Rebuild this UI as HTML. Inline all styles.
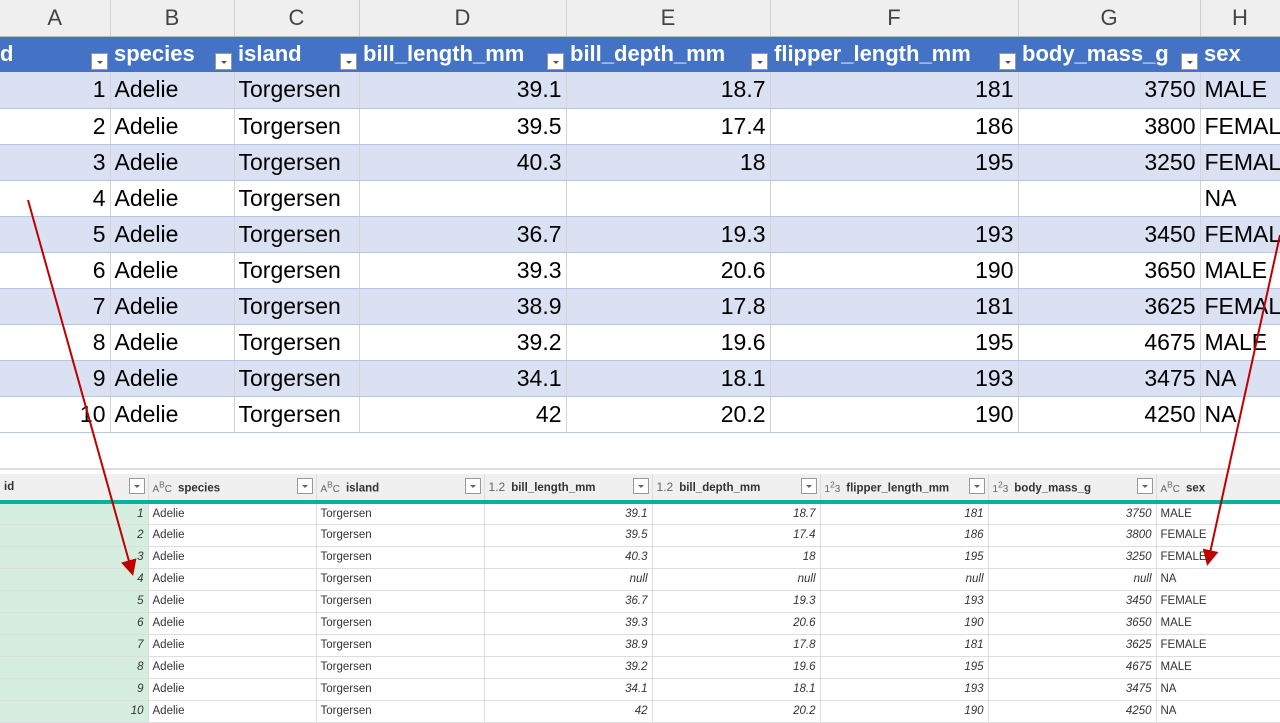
<!DOCTYPE html>
<html><head><meta charset="utf-8"><style>
body{margin:0;width:1280px;height:720px;overflow:hidden;background:#fff;font-family:"Liberation Sans",sans-serif;position:relative}
table{border-collapse:collapse;table-layout:fixed;position:absolute;left:0;width:1280px}
#top{top:0}
#top td{height:36px;padding:0 4px;font-size:23px;white-space:nowrap;overflow:hidden;border-right:1px solid #d4d4d4;box-sizing:border-box}
#top tr.L td{background:#efefef;color:#444;text-align:center;font-size:22px;border-right:1px solid #d0d0d0;border-bottom:1px solid #bbb}
#top tr.H td{background:#4472c4;color:#fff;font-weight:bold;border-right:none;position:relative;font-size:22px}
#top tr.o td{background:#d9e1f2;border-bottom:1px solid #b4c6e7}
#top tr.e td{background:#fff;border-bottom:1px solid #b4c6e7}
.r{text-align:right}
.dd{position:absolute;right:2px;bottom:2px;width:17px;height:17px;background:#fff;border:1px solid #999;box-sizing:border-box}
.dd:after{content:"";position:absolute;left:5px;top:7px;border-left:3px solid transparent;border-right:3px solid transparent;border-top:3px solid #555}
#bot{top:474px}
#bot td{height:22px;padding:0 4px;font-size:11.5px;color:#333;white-space:nowrap;overflow:hidden;box-sizing:border-box;border-right:1px solid #ddd;border-bottom:1px solid #ddd}
#bot tr.H td{height:28px;background:#f0f0f0;font-weight:bold;border-bottom:4px solid #00b4a0;position:relative;border-right:1px solid #ddd;color:#333}
#bot td.g{background:#d5eee0}
#bot td.n{text-align:right;font-style:italic}
.t{font-weight:normal;color:#666;font-size:10px;margin-right:6px}
.d2{position:absolute;right:3px;top:4px;width:16px;height:16px;border:1px solid #999;background:#fff;box-sizing:border-box}
.d2:after{content:"";position:absolute;left:4px;top:6px;border-left:3px solid transparent;border-right:3px solid transparent;border-top:3px solid #666}
</style></head><body>
<table id="top">
<colgroup><col style="width:110px"><col style="width:124px"><col style="width:125px"><col style="width:207px"><col style="width:204px"><col style="width:248px"><col style="width:182px"><col style="width:80px"></colgroup>
<tr class="L"><td>A</td><td>B</td><td>C</td><td>D</td><td>E</td><td>F</td><td>G</td><td>H</td></tr>
<tr class="H"><td style="padding-left:0">d<span class="dd"></span></td><td>species<span class="dd"></span></td><td>island<span class="dd"></span></td><td>bill_length_mm<span class="dd"></span></td><td>bill_depth_mm<span class="dd"></span></td><td>flipper_length_mm<span class="dd"></span></td><td>body_mass_g<span class="dd"></span></td><td>sex</td></tr>
<tr class="o"><td class="r">1</td><td>Adelie</td><td>Torgersen</td><td class="r">39.1</td><td class="r">18.7</td><td class="r">181</td><td class="r">3750</td><td>MALE</td></tr>
<tr class="e"><td class="r">2</td><td>Adelie</td><td>Torgersen</td><td class="r">39.5</td><td class="r">17.4</td><td class="r">186</td><td class="r">3800</td><td>FEMALE</td></tr>
<tr class="o"><td class="r">3</td><td>Adelie</td><td>Torgersen</td><td class="r">40.3</td><td class="r">18</td><td class="r">195</td><td class="r">3250</td><td>FEMALE</td></tr>
<tr class="e"><td class="r">4</td><td>Adelie</td><td>Torgersen</td><td></td><td></td><td></td><td></td><td>NA</td></tr>
<tr class="o"><td class="r">5</td><td>Adelie</td><td>Torgersen</td><td class="r">36.7</td><td class="r">19.3</td><td class="r">193</td><td class="r">3450</td><td>FEMALE</td></tr>
<tr class="e"><td class="r">6</td><td>Adelie</td><td>Torgersen</td><td class="r">39.3</td><td class="r">20.6</td><td class="r">190</td><td class="r">3650</td><td>MALE</td></tr>
<tr class="o"><td class="r">7</td><td>Adelie</td><td>Torgersen</td><td class="r">38.9</td><td class="r">17.8</td><td class="r">181</td><td class="r">3625</td><td>FEMALE</td></tr>
<tr class="e"><td class="r">8</td><td>Adelie</td><td>Torgersen</td><td class="r">39.2</td><td class="r">19.6</td><td class="r">195</td><td class="r">4675</td><td>MALE</td></tr>
<tr class="o"><td class="r">9</td><td>Adelie</td><td>Torgersen</td><td class="r">34.1</td><td class="r">18.1</td><td class="r">193</td><td class="r">3475</td><td>NA</td></tr>
<tr class="e"><td class="r">10</td><td>Adelie</td><td>Torgersen</td><td class="r">42</td><td class="r">20.2</td><td class="r">190</td><td class="r">4250</td><td>NA</td></tr>
</table>
<div style="position:absolute;left:0;top:468px;width:1280px;height:2px;background:#ddd"></div>
<table id="bot">
<colgroup><col style="width:148px"><col style="width:168px"><col style="width:168px"><col style="width:168px"><col style="width:168px"><col style="width:168px"><col style="width:168px"><col style="width:124px"></colgroup>
<tr class="H"><td class="g">id<span class="d2"></span></td><td><span class="t">A<sup>B</sup>C</span>species<span class="d2"></span></td><td><span class="t">A<sup>B</sup>C</span>island<span class="d2"></span></td><td><span class="t" style="font-size:12px">1.2</span>bill_length_mm<span class="d2"></span></td><td><span class="t" style="font-size:12px">1.2</span>bill_depth_mm<span class="d2"></span></td><td><span class="t">1<sup>2</sup>3</span>flipper_length_mm<span class="d2"></span></td><td><span class="t">1<sup>2</sup>3</span>body_mass_g<span class="d2"></span></td><td><span class="t">A<sup>B</sup>C</span>sex</td></tr>
<tr><td class="g n">1</td><td>Adelie</td><td>Torgersen</td><td class="n">39.1</td><td class="n">18.7</td><td class="n">181</td><td class="n">3750</td><td>MALE</td></tr>
<tr><td class="g n">2</td><td>Adelie</td><td>Torgersen</td><td class="n">39.5</td><td class="n">17.4</td><td class="n">186</td><td class="n">3800</td><td>FEMALE</td></tr>
<tr><td class="g n">3</td><td>Adelie</td><td>Torgersen</td><td class="n">40.3</td><td class="n">18</td><td class="n">195</td><td class="n">3250</td><td>FEMALE</td></tr>
<tr><td class="g n">4</td><td>Adelie</td><td>Torgersen</td><td class="n">null</td><td class="n">null</td><td class="n">null</td><td class="n">null</td><td>NA</td></tr>
<tr><td class="g n">5</td><td>Adelie</td><td>Torgersen</td><td class="n">36.7</td><td class="n">19.3</td><td class="n">193</td><td class="n">3450</td><td>FEMALE</td></tr>
<tr><td class="g n">6</td><td>Adelie</td><td>Torgersen</td><td class="n">39.3</td><td class="n">20.6</td><td class="n">190</td><td class="n">3650</td><td>MALE</td></tr>
<tr><td class="g n">7</td><td>Adelie</td><td>Torgersen</td><td class="n">38.9</td><td class="n">17.8</td><td class="n">181</td><td class="n">3625</td><td>FEMALE</td></tr>
<tr><td class="g n">8</td><td>Adelie</td><td>Torgersen</td><td class="n">39.2</td><td class="n">19.6</td><td class="n">195</td><td class="n">4675</td><td>MALE</td></tr>
<tr><td class="g n">9</td><td>Adelie</td><td>Torgersen</td><td class="n">34.1</td><td class="n">18.1</td><td class="n">193</td><td class="n">3475</td><td>NA</td></tr>
<tr><td class="g n">10</td><td>Adelie</td><td>Torgersen</td><td class="n">42</td><td class="n">20.2</td><td class="n">190</td><td class="n">4250</td><td>NA</td></tr>
</table>
<svg style="position:absolute;left:0;top:0" width="1280" height="720">
<defs><marker id="a" markerWidth="8" markerHeight="8" refX="6" refY="4" orient="auto"><path d="M0,0 L8,4 L0,8 Z" fill="#c00000"/></marker></defs>
<line x1="28" y1="200" x2="132" y2="572" stroke="#c00000" stroke-width="2" marker-end="url(#a)"/>
<line x1="1280" y1="235" x2="1208" y2="562" stroke="#c00000" stroke-width="2" marker-end="url(#a)"/>
</svg>
</body></html>
